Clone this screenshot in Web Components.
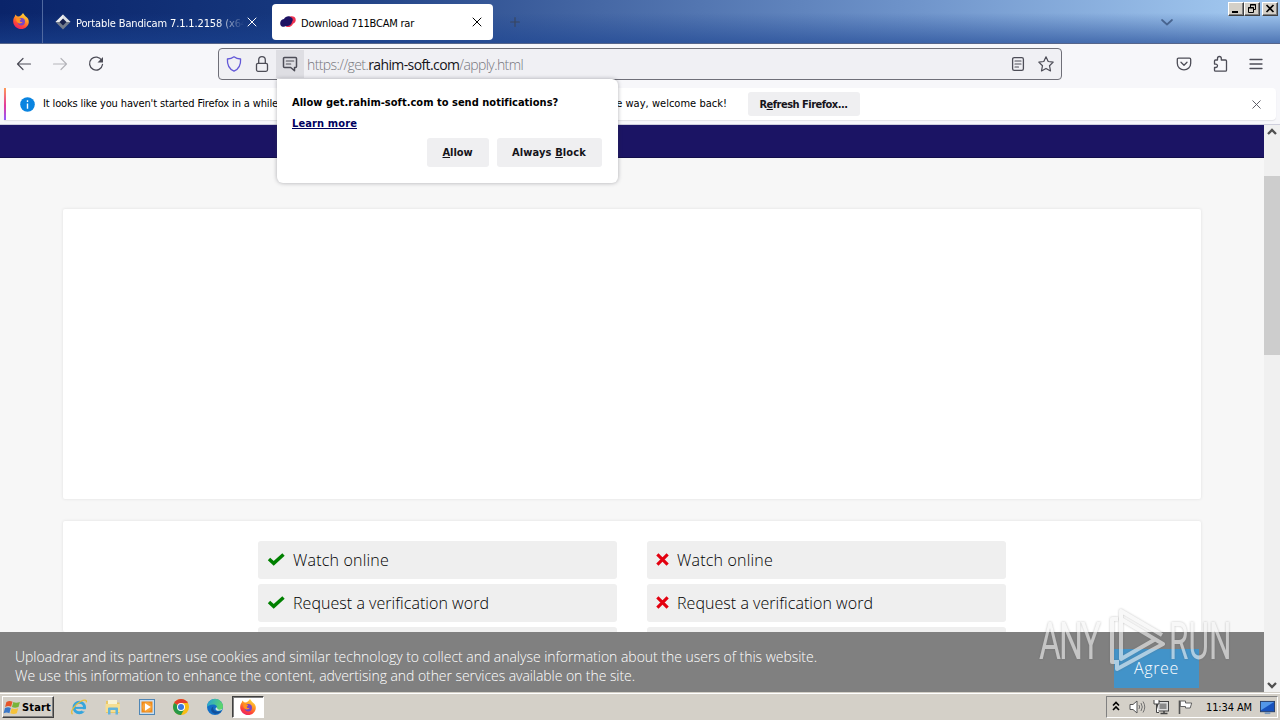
<!DOCTYPE html>
<html lang="en">
<head>
<meta charset="utf-8">
<title>Download 711BCAM rar</title>
<style>
    body { margin: 0; width: 1280px; height: 720px; overflow: hidden; font-family: "DejaVu Sans Condensed", "DejaVu Sans", sans-serif; font-stretch: condensed; font-size: 11px; color: #000; }
</style>
</head>
<body>
    <desktop-screen>
        <title-bar slot="chrome">
            <browser-tab width="229"><ui-icon slot="icon" name="diamond" size="16"></ui-icon><fit-text w="171">Portable Bandicam 7.1.1.2158 (x64</fit-text></browser-tab>
            <browser-tab width="221" active><ui-icon slot="icon" name="blob" size="16"></ui-icon><fit-text w="113">Download 711BCAM rar</fit-text></browser-tab>
        </title-bar>
        <nav-bar slot="chrome"></nav-bar>
        <notice-bar slot="chrome">
            <fit-text w="235">It looks like you haven't started Firefox in a while</fit-text>
            <fit-text w="121" slot="end">the way, welcome back!</fit-text>
            <push-button slot="action" width="112" height="24"><fit-text w="88">R<u>e</u>fresh Firefox...</fit-text></push-button>
        </notice-bar>

        <web-page slot="page">
            <feature-list slot="features">
                <feature-item kind="yes"><fit-text w="96">Watch online</fit-text></feature-item>
                <feature-item kind="yes"><fit-text w="196">Request a verification word</fit-text></feature-item>
                <feature-item kind="yes"></feature-item>
            </feature-list>
            <feature-list slot="features">
                <feature-item kind="no"><fit-text w="96">Watch online</fit-text></feature-item>
                <feature-item kind="no"><fit-text w="196">Request a verification word</fit-text></feature-item>
                <feature-item kind="no"></feature-item>
            </feature-list>
            <cookie-bar slot="footer">
                <fit-text w="802">Uploadrar and its partners use cookies and similar technology to collect and analyse information about the users of this website.</fit-text>
                <fit-text w="620">We use this information to enhance the content, advertising and other services available on the site.</fit-text>
                <fit-text slot="agree" w="45">Agree</fit-text>
            </cookie-bar>
        </web-page>

        <task-bar slot="taskbar"></task-bar>

        <permission-popup slot="overlay">
            <fit-text w="266">Allow get.rahim-soft.com to send notifications?</fit-text>
            <fit-text slot="link" w="65">Learn more</fit-text>
            <push-button slot="actions" width="62" height="29"><fit-text w="30"><u>A</u>llow</fit-text></push-button>
            <push-button slot="actions" width="105" height="29"><fit-text w="74">Always <u>B</u>lock</fit-text></push-button>
        </permission-popup>
        <water-mark slot="overlay"></water-mark>
    </desktop-screen>
</body>
<script>
    const line = 'fill="none" stroke="currentColor" stroke-linecap="round" stroke-linejoin="round"';

    // every icon sits in a 16 x 16 box
    const icons = {
        firefox: `<defs><linearGradient id="f" x1=".8" y1="0" x2=".3" y2="1"><stop offset="0" stop-color="#ffe140"/><stop offset=".4" stop-color="#ff9a25"/><stop offset=".75" stop-color="#ff4238"/><stop offset="1" stop-color="#e8226a"/></linearGradient></defs>
            <path fill="url(#f)" d="M10 0c1 1.500 1.500 2.300 2.500 3.200C14.800 4.700 16 6.500 15.800 9.200 15.500 13 12.200 16 8.200 16 4 16 .4 12.800.2 8.700.1 6.400.8 4.600 2 3l.4-1.600L4 3.200l2 .2C7.500 3 8.700 1.700 10 0z"/>
            <circle cx="8.300" cy="8.700" r="3.700" fill="#7746c6"/>
            <path fill="#ff9320" d="M3.400 5.200c1.800-.4 3.500.1 4.800 1.300L6.700 7.700c.2 1.200 1.500 1.600 3 1-1 1.900-3.600 2.300-5.200.8C3.400 8.400 3 6.800 3.400 5.200z"/>`,
        diamond: `<path d="M8 .5 15.500 8 8 15.500.5 8z" fill="#747d8c"/><path d="M8 .5 15.500 8H8z" fill="#d9dde3"/><path d="M8 .5.5 8H8z" fill="#eceef2"/><path d="M8 4.500 11.500 8 8 11.500 4.500 8z" fill="#17214d"/>`,
        blob: `<path d="M8.500 3.500c2-2 6-1.800 7 1 .8 2.500-.4 4.500-2.500 5.200-1 3.300-5 3.800-7 3z" fill="#ee3150"/><path d="M4 5c1.500-3.200 5.500-3.600 7-1.700 2 .5 2.300 3.200 1 4.700-.5 3-3.500 4.600-6 4C4.500 13.500.5 13 .2 10 0 7.200 1.500 5.400 4 5z" fill="#1d1263"/>`,
        close: `<path ${line} d="M4 4l8 8M12 4l-8 8"/>`,
        plus: `<path ${line} stroke-width="1.300" d="M8 3v10M3 8h10"/>`,
        chevron: `<path ${line} stroke-width="1.700" d="M3 6l5 4.500L13 6"/>`,
        back: `<path ${line} stroke-width="1.200" d="M1.500 8h13M7 2.500 1.500 8 7 13.500"/>`,
        forward: `<path ${line} stroke-width="1.200" d="M14.500 8h-13M9 2.500 14.500 8 9 13.500"/>`,
        reload: `<path ${line} stroke-width="1.300" d="M13.800 4.500A6.500 6.500 0 1 0 14.500 8.500"/><path fill="currentColor" d="M15 1v5.500H9.500z"/>`,
        shield: `<path ${line} stroke-width="1.300" d="M8 .8c2 1.500 4.200 2.100 6.600 2.200.3 5.600-1.600 10-6.600 12.200C3 13 1.100 8.600 1.400 3 3.800 2.900 6 2.300 8 .8z"/>`,
        lock: `<rect x="2.500" y="7.300" width="11" height="8" rx="1.500" ${line} stroke-width="1.300"/><path ${line} stroke-width="1.300" d="M4.700 7V4a3.300 3.300 0 0 1 6.600 0v3"/>`,
        message: `<path ${line} stroke-width="1.500" d="M2.500 1.500h11a1 1 0 0 1 1 1v8a1 1 0 0 1-1 1H12.500v3.300L8.700 11.500H2.500a1 1 0 0 1-1-1v-8a1 1 0 0 1 1-1z"/><path ${line} stroke-width="1.200" d="M4.300 5h7.400M4.300 8h4.400"/>`,
        reader: `<rect x="2.600" y="1.600" width="10.800" height="12.800" rx="1.600" ${line} stroke-width="1.300"/><path ${line} stroke-width="1.200" d="M5 5h6M5 8h6M5 11h3.500"/>`,
        star: `<path ${line} stroke-width="1.200" d="M8 .8l2.200 4.700 5 .6-3.700 3.600 1 5.200L8 12.400l-4.500 2.500 1-5.200L.8 6.100l5-.6z"/>`,
        pocket: `<path ${line} stroke-width="1.300" d="M2.500 2.200h11c.7 0 1.200.5 1.200 1.200v3.800a6.700 6.700 0 0 1-13.400 0V3.400c0-.7.500-1.200 1.200-1.200z"/><path ${line} stroke-width="1.300" d="M5 6.300l3 2.900 3-2.900"/>`,
        puzzle: `<path ${line} stroke-width="1.300" d="M5.500 4V2.400a1.900 1.900 0 0 1 3.800 0V4h4.200c.6 0 1 .4 1 1v9.200c0 .6-.4 1-1 1H3.500c-.6 0-1-.4-1-1v-2.700h1.300a1.700 1.700 0 0 0 0-3.400H2.500V5c0-.6.400-1 1-1z"/>`,
        menu: `<path ${line} stroke-width="1.300" d="M2 3.500h12M2 8h12M2 12.500h12"/>`,
        info: `<circle cx="8" cy="8" r="7.800" fill="#0a84e0"/><path stroke="#fff" stroke-width="1.500" d="M8 7v5.500M8 3.500v1.700"/>`,
        check: `<path fill="none" stroke="green" stroke-width="3.500" d="M1 7l4.700 4.300L15.500 2.500"/>`,
        cross: `<path fill="none" stroke="#e3000f" stroke-width="3.300" d="M2.500 2.500l11 11M13.500 2.500l-11 11"/>`,
        arrow: `<path fill="none" stroke="#505050" stroke-width="2.300" d="M4 9l4-4 4 4"/>`,
        windows: `<path d="M1.500 2.200C4 .5 6.300 1 8 1.800L6.500 7.200C4.500 6.200 2.700 6.200.1 7.400z" fill="#e7562a"/><path d="M8.900 2.200c2 1 4.500.9 7-.2l-1.500 5.400c-2.500 1-4.700 1-7 .1z" fill="#78b43a"/><path d="M0 8.600c2.300-1.200 4.300-1.200 6.200 0L4.700 14.200C2.800 13 1 13-1.500 14z" fill="#3b78c8"/><path d="M7.100 8.900c2.200.9 4.500.9 7-.1l-1.500 5.400c-2.300 1-4.800.9-7-.2z" fill="#f5c23a"/>`,
        ie: `<circle cx="8.300" cy="8.500" r="5.300" fill="none" stroke="#35a5dd" stroke-width="3"/><path d="M4 8.900h9" stroke="#35a5dd" stroke-width="2"/><path d="M9.800 10.200h7v2.200h-5z" fill="#d4d0c8"/><path d="M1.500 15.300c-3-2.800 3-10 8-12.800 3.500-1.900 6.500-2 5.800.8" fill="none" stroke="#e7bd38" stroke-width="1.300"/>`,
        folder: `<path d="M1 2h5l1 1.500h7.500V14H1z" fill="#e8c767"/><path d="M3 1h9v5H3z" fill="#f8f3d7"/><path d="M.5 5h14.500v8H.5z" fill="#f6df92"/><path d="M3 15.500V9.500q0-1 1-1h8q1 0 1 1v6h-2.500V11h-5v4.500z" fill="#62b4dc"/>`,
        media: `<rect x=".5" y=".5" width="15" height="15" fill="#c7ddf0" stroke="#4f86b5"/><rect x="2.500" y="2.500" width="11" height="11" fill="#f08a18"/><circle cx="8" cy="8" r="4.800" fill="#f8a43a"/><path d="M6 4.300 11.800 8 6 11.700z" fill="#fff"/>`,
        chrome: `<circle cx="8" cy="8" r="8" fill="#f9bd14"/><path d="M8 8 1.100 4A8 8 0 0 1 14.900 4z" fill="#e23c2d"/><path d="M8 8 1.100 4A8 8 0 0 0 8 16l3.400-6z" fill="#279847"/><path d="M8 4h6.900L12 9z" fill="#f9bd14"/><circle cx="8" cy="8" r="4" fill="#fff"/><circle cx="8" cy="8" r="3" fill="#3878e0"/>`,
        edge: `<defs><linearGradient id="e" x1="0" y1="0" x2="1" y2=".3"><stop offset="0" stop-color="#239fdd"/><stop offset="1" stop-color="#5cd66c"/></linearGradient></defs><circle cx="8" cy="8" r="8" fill="#136fc6"/><path d="M0 8a8 8 0 0 1 16-.5c0 2.700-1.600 4-4 4-1.600 0-2.800-.6-2.500-1.500C11 7.500 9 5.500 6 5.500 3 5.500.5 7 0 8z" fill="url(#e)"/><path d="M6.500 7.500c-1.500 3.500 2 6.500 8 4.500-2 3-7 4-9.500 1-1.500-1.800-.8-4.500 1.500-5.500z" fill="#12509a"/><path d="M9.600 8.300c1 2.500 2.500 3.200 5.900 1.500-.3 1.500-4.500 3-6.500 1.200-.9-.8-.4-2 .6-2.700z" fill="#d4e5e7"/>`,
        up: `<path fill="none" stroke="#000" stroke-width="1.600" d="M5 6.500l3-3 3 3M5 11l3-3 3 3"/>`,
        speaker: `<path d="M1 5.500h3L8 2v12L4 10.500H1z" fill="#fff" stroke="#555"/><path fill="none" stroke="#666" stroke-width=".9" d="M10 6q1.300 2 0 4M12 4q2.600 4 0 8M14 2.500q3.500 5.500 0 11"/>`,
        network: `<rect x="4.500" y="2.500" width="11" height="9.500" fill="#ddd" stroke="#444"/><rect x="6.500" y="4.500" width="7" height="5.500" fill="#8a8a8a"/><path d="M7.500 14.500h7M11 12v2" stroke="#444" stroke-width="1.500"/><path d="M1 1v4h5V1M3.500 5v8.500H6" fill="#fff" stroke="#444"/>`,
        flag: `<path d="M2.500 1.500V15" stroke="#555" stroke-width="1.600"/><path d="M3.300 2h5.200v2H14.700l-1.500 5H8.500V7.500H3.300z" fill="#fff" stroke="#555" stroke-width=".9"/>`,
        screen: `<rect x=".5" y="1.500" width="15" height="11" fill="#1752bd" stroke="#273f68"/><path d="M1 2h14L1 11z" fill="#5397e8"/><path d="M5 14h6" stroke="#7898bd" stroke-width="2"/>`
    };

    class UiIcon extends HTMLElement {
        connectedCallback() {
            const size = this.getAttribute('size') || 16;
            this.attachShadow({ mode : 'open' });
            this.shadowRoot.innerHTML = `
                <style>
                    :host { display: block; flex: none; width: ${size}px; height: ${size}px; }
                    svg { display: block; overflow: visible; }
                </style>
                <svg width="${size}" height="${size}" viewBox="0 0 16 16">${icons[this.getAttribute('name')]}</svg>
            `;
        }
    }

    // spreads its letters so that the text takes exactly w pixels
    class FitText extends HTMLElement {
        connectedCallback() {
            this.attachShadow({ mode : 'open' });
            this.shadowRoot.innerHTML = `
                <style>
                    :host { display: block; white-space: nowrap; flex: none; width: max-content; }
                </style>
                <slot></slot>
            `;
            const extra = this.getAttribute('w') - this.getBoundingClientRect().width;
            this.style.letterSpacing = extra / this.textContent.length + 'px';
        }
    }

    class DesktopScreen extends HTMLElement {
        connectedCallback() {
            this.attachShadow({ mode : 'open' });
            this.shadowRoot.innerHTML = `
                <style>
                    :host { display: flex; flex-direction: column; width: 1280px; height: 720px; background: #f7f7fa; overflow: hidden; }
                </style>
                <slot name="chrome"></slot>
                <slot name="page"></slot>
                <slot name="taskbar"></slot>
                <slot name="overlay"></slot>
            `;
        }
    }

    class TitleBar extends HTMLElement {
        connectedCallback() {
            this.attachShadow({ mode : 'open' });
            this.shadowRoot.innerHTML = `
                <style>
                    :host { display: flex; height: 44px; flex: none; box-sizing: border-box; border-bottom: 1px solid #56658a;
                        background: linear-gradient(to bottom, rgba(30,70,150,0) 0, rgba(30,70,150,.0) 30%, rgba(28,68,145,.62) 100%), linear-gradient(to right, #0a246a 0, #15367c 270px, #4668a5 600px, #6d92c9 900px, #a0c6ee 1240px); }
                    .app { width: 41px; padding-right: 1px; display: flex; align-items: center; justify-content: center; border-right: 1px solid #5069a0; }
                    .app ui-icon { margin-top: -1px; }
                    .add { display: flex; align-items: center; margin-left: 15px; color: #38455f; }
                    .list { display: flex; align-items: center; margin-left: auto; margin-right: 53px; color: #48648f; }
                    .buttons { display: flex; padding: 2px 2px 0 0; }
                    .buttons div { width: 16px; height: 14px; box-sizing: border-box; background: #d4d0c8; border: 1px solid; border-color: #fff #404040 #404040 #fff; box-shadow: inset -1px -1px #808080; }
                    .buttons div:last-child { margin-left: 2px; }
                    .buttons svg { display: block; }
                </style>
                <div class="app"><ui-icon name="firefox" size="16"></ui-icon></div>
                <slot></slot>
                <div class="add"><ui-icon name="plus" size="14"></ui-icon></div>
                <div class="list"><ui-icon name="chevron" size="16"></ui-icon></div>
                <div class="buttons">
                    <div><svg width="14" height="12"><path d="M3 8h6v2H3z"/></svg></div>
                    <div><svg width="14" height="12"><path d="M5.500 4.500v-3h5v5h-2M5 2h6M3.500 4.500h5v5h-5zM3 5h6" fill="none" stroke="#000"/></svg></div>
                    <div><svg width="14" height="12"><path d="M3.500 2l7 7M10.500 2l-7 7" stroke="#000" stroke-width="1.700"/></svg></div>
                </div>
            `;
        }
    }

    class BrowserTab extends HTMLElement {
        connectedCallback() {
            this.attachShadow({ mode : 'open' });
            this.shadowRoot.innerHTML = `
                <style>
                    :host { display: flex; align-items: center; flex: none; box-sizing: border-box; width: ${this.getAttribute('width')}px; margin: 4px 0 3px; padding: 0 12px; color: #fff; border-radius: 4px; }
                    :host([active]) { background: #fff; color: #000; padding: 0 8px; }
                    .text { flex: 1; overflow: hidden; margin: 2px 0 0 5px; }
                    :host(:not([active])) .text { flex: 0 0 168px; mask-image: linear-gradient(to left, transparent, #000 28px); -webkit-mask-image: linear-gradient(to left, transparent, #000 28px); }
                    .x { margin-left: auto; }
                </style>
                <slot name="icon"></slot>
                <div class="text"><slot></slot></div>
                <ui-icon class="x" name="close" size="16"></ui-icon>
            `;
        }
    }

    class NavBar extends HTMLElement {
        connectedCallback() {
            this.attachShadow({ mode : 'open' });
            this.shadowRoot.innerHTML = `
                <style>
                    :host { display: flex; align-items: center; flex: none; height: 44px; padding: 0 16px 4px; box-sizing: border-box; background: #f7f7fa; color: #4d4d57; }
                    .moves { display: flex; gap: 20px; width: 202px; }
                    .off { opacity: .38; }
                    .url { display: flex; align-items: center; width: 844px; height: 32px; box-sizing: border-box; border: 1px solid #6f6f78; border-radius: 4px; background: #f0f0f4; }
                    .shield { color: #6358d8; margin: 0 12px 0 7px; }
                    .perm { display: flex; align-items: center; justify-content: center; width: 28px; height: 28px; background: #dedee3; margin-left: 6px; }
                    .address { font: 350 14px "Open Sans", sans-serif; color: #77777d; margin-left: 3px; }
                    b { font-weight: 400; color: #15141a; }
                    .star { margin: 0 7px 0 12px; }
                    .reader { margin-left: auto; }
                    .tools { display: flex; gap: 20px; margin-left: auto; }
                </style>
                <div class="moves">
                    <ui-icon name="back"></ui-icon>
                    <ui-icon name="forward" class="off"></ui-icon>
                    <ui-icon name="reload"></ui-icon>
                </div>
                <div class="url">
                    <ui-icon class="shield" name="shield"></ui-icon>
                    <ui-icon name="lock"></ui-icon>
                    <div class="perm"><ui-icon name="message"></ui-icon></div>
                    <fit-text class="address" w="216">https://get.<b>rahim-soft.com</b>/apply.html</fit-text>
                    <ui-icon class="reader" name="reader"></ui-icon>
                    <ui-icon class="star" name="star"></ui-icon>
                </div>
                <div class="tools">
                    <ui-icon name="pocket"></ui-icon>
                    <ui-icon name="puzzle"></ui-icon>
                    <ui-icon name="menu"></ui-icon>
                </div>
            `;
        }
    }

    class NoticeBar extends HTMLElement {
        connectedCallback() {
            this.attachShadow({ mode : 'open' });
            this.shadowRoot.innerHTML = `
                <style>
                    :host { display: block; flex: none; height: 37px; box-sizing: border-box; padding: 0 4px; background: #f7f7fa; border-bottom: 1px solid #cfcfdc; }
                    .bar { display: flex; align-items: center; height: 32px; background: #fff; border-radius: 0 4px 4px 0; box-shadow: 0 1px 1px #e2e2e6; }
                    .edge { width: 2px; height: 32px; background: linear-gradient(#ff9a56, #e2389c 55%, #9059ff); }
                    .icon { margin: 0 8px 0 14px; }
                    .message { display: flex; justify-content: space-between; width: 684px; margin-top: -1px; }
                    .action { margin-left: 21px; }
                    .x { margin: 0 12px 0 auto; color: #55555f; }
                </style>
                <div class="bar">
                    <div class="edge"></div>
                    <ui-icon class="icon" name="info" size="15"></ui-icon>
                    <div class="message"><slot></slot><slot name="end"></slot></div>
                    <div class="action"><slot name="action"></slot></div>
                    <ui-icon class="x" name="close" size="15"></ui-icon>
                </div>
            `;
        }
    }

    class PushButton extends HTMLElement {
        connectedCallback() {
            this.attachShadow({ mode : 'open' });
            this.shadowRoot.innerHTML = `
                <style>
                    :host { display: flex; align-items: center; justify-content: center; width: ${this.getAttribute('width')}px; height: ${this.getAttribute('height')}px; padding-right: 1px; box-sizing: border-box; background: #efeff1; border-radius: 3px; font-weight: bold; color: #15141a; }
                    ::slotted(fit-text) { margin-top: 1px; }
                </style>
                <slot></slot>
            `;
        }
    }

    class WebPage extends HTMLElement {
        connectedCallback() {
            this.attachShadow({ mode : 'open' });
            this.shadowRoot.innerHTML = `
                <style>
                    :host { display: flex; flex: none; height: 567px; font-family: "Open Sans", sans-serif; font-stretch: normal; font-size: 16px; font-weight: 350; overflow: hidden; }
                    main { display: flex; flex-direction: column; width: 1264px; background: #f7f7f7; overflow: hidden; }
                    .head { height: 33px; flex: none; background: #1b1464; box-sizing: border-box; border-bottom: 1px solid #120e4a; }
                    .card { background: #fff; box-shadow: 0 0 3px #dcdcdc; margin: 0 63px; flex: none; border-radius: 2px; }
                    .ad { height: 290px; margin-top: 51px; }
                    .features { display: flex; justify-content: center; gap: 30px; height: 111px; margin-top: 22px; padding-top: 20px; box-sizing: border-box; }
                    .scroll { display: flex; flex-direction: column; align-items: center; width: 16px; background: #f0f0f0; }
                    .thumb { width: 16px; height: 179px; background: #cdcdcd; margin: 35px 0 auto; }
                    .down { transform: rotate(180deg); }
                </style>
                <main>
                    <div class="head"></div>
                    <div class="card ad"></div>
                    <div class="card features"><slot name="features"></slot></div>
                    <slot name="footer"></slot>
                </main>
                <div class="scroll">
                    <ui-icon name="arrow"></ui-icon>
                    <div class="thumb"></div>
                    <ui-icon name="arrow" class="down"></ui-icon>
                </div>
            `;
        }
    }

    class FeatureList extends HTMLElement {
        connectedCallback() {
            this.attachShadow({ mode : 'open' });
            this.shadowRoot.innerHTML = `
                <style>
                    :host { display: flex; flex-direction: column; gap: 5px; width: 359px; }
                </style>
                <slot></slot>
            `;
        }
    }

    class FeatureItem extends HTMLElement {
        connectedCallback() {
            const yes = this.getAttribute('kind') == 'yes';
            this.attachShadow({ mode : 'open' });
            this.shadowRoot.innerHTML = `
                <style>
                    :host { display: flex; align-items: center; flex: none; height: 38px; box-sizing: border-box; padding: 0 ${yes ? 10 : 8}px 1px; gap: ${yes ? 9 : 7}px; background: #efefef; border-radius: 3px; }
                </style>
                <ui-icon name="${yes ? 'check' : 'cross'}" size="${yes ? 16 : 15}"></ui-icon>
                <slot></slot>
            `;
        }
    }

    class CookieBar extends HTMLElement {
        connectedCallback() {
            this.attachShadow({ mode : 'open' });
            this.shadowRoot.innerHTML = `
                <style>
                    :host { display: flex; flex: none; justify-content: space-between; height: 60px; margin-top: auto; box-sizing: border-box; padding: 15px 65px 0 15px; background: #808080; color: #fff; font-size: 14px; line-height: 19px; position: relative; }
                    .agree { display: flex; align-items: center; justify-content: center; width: 85px; height: 39px; background: #4293c9; font-size: 16px; margin-top: 2px; }
                </style>
                <div><slot></slot></div>
                <div class="agree"><slot name="agree"></slot></div>
            `;
        }
    }

    class TaskBar extends HTMLElement {
        connectedCallback() {
            this.attachShadow({ mode : 'open' });
            this.shadowRoot.innerHTML = `
                <style>
                    :host { display: flex; align-items: center; flex: none; height: 28px; box-sizing: border-box; padding: 2px 2px 1px; background: #d4d0c8; border-top: 1px solid #d4d0c8; box-shadow: inset 0 1px #fff; }
                    .start { display: flex; align-items: center; gap: 2px; width: 52px; height: 22px; box-sizing: border-box; padding-left: 2px; border: 1px solid; border-color: #fff #404040 #404040 #fff; box-shadow: inset -1px -1px #808080; font-weight: bold; }
                    .apps { display: flex; align-items: center; gap: 18px; margin-left: 17px; }
                    .open { display: flex; align-items: center; justify-content: center; width: 32px; height: 22px; box-sizing: border-box; background: #fff; border: 1px solid; border-color: #404040 #fff #fff #404040; box-shadow: inset 1px 1px #808080; margin-left: 9px; }
                    .tray { display: flex; align-items: center; margin-left: auto; width: 172px; height: 22px; box-sizing: border-box; padding-left: 1px; border: 1px solid; border-color: #808080 #fff #fff #808080; gap: 8px; }
                    .tray ui-icon:nth-child(1) { margin-right: -3px; }
                    .clock { margin: 0 0 0 5px; }
                </style>
                <div class="start"><ui-icon name="windows" size="15"></ui-icon><fit-text w="29">Start</fit-text></div>
                <div class="apps">
                    <ui-icon name="ie" size="16"></ui-icon>
                    <ui-icon name="folder" size="16"></ui-icon>
                    <ui-icon name="media" size="16"></ui-icon>
                    <ui-icon name="chrome" size="16"></ui-icon>
                    <ui-icon name="edge" size="16"></ui-icon>
                </div>
                <div class="open"><ui-icon name="firefox" size="16"></ui-icon></div>
                <div class="tray">
                    <ui-icon name="up"></ui-icon>
                    <ui-icon name="speaker"></ui-icon>
                    <ui-icon name="network"></ui-icon>
                    <ui-icon name="flag"></ui-icon>
                    <fit-text class="clock" w="46">11:34 AM</fit-text>
                    <ui-icon name="screen" size="15"></ui-icon>
                </div>
            `;
        }
    }

    class PermissionPopup extends HTMLElement {
        connectedCallback() {
            this.attachShadow({ mode : 'open' });
            this.shadowRoot.innerHTML = `
                <style>
                    :host { display: flex; flex-direction: column; position: absolute; left: 277px; top: 79px; width: 341px; height: 104px; box-sizing: border-box; padding: 16px 16px 16px 15px; background: #fff; border-radius: 0 6px 6px 6px; box-shadow: 0 0 4px rgba(58,57,68,.4); font-weight: bold; line-height: 16px; }
                    .link { color: #00005f; text-decoration: underline; margin-top: 5px; width: max-content; }
                    .actions { display: flex; justify-content: flex-end; gap: 8px; margin-top: auto; }
                </style>
                <slot></slot>
                <div class="link"><slot name="link"></slot></div>
                <div class="actions"><slot name="actions"></slot></div>
            `;
        }
    }

    class WaterMark extends HTMLElement {
        connectedCallback() {
            this.attachShadow({ mode : 'open' });
            this.shadowRoot.innerHTML = `
                <style>
                    :host { display: block; position: absolute; left: 1030px; top: 600px; width: 240px; height: 90px; opacity: .6; filter: drop-shadow(0 0 1px rgba(90,90,90,.6)); }
                    svg { display: block; overflow: visible; }
                    text { font: 400 51px Roboto, sans-serif; fill: #f4f4f4; }
                </style>
                <svg width="240" height="90">
                    <text transform="translate(9 59) scale(.66 1)" textLength="94" lengthAdjust="spacing">ANY</text>
                    <text transform="translate(139 59) scale(.62 1)" textLength="101" lengthAdjust="spacing">RUN</text>
                    <path fill="none" stroke="#f4f4f4" stroke-width="4" stroke-linejoin="round" d="M88 19h-6v43h7M132 35 91 11v48l33-19M87 62v7l46-25-42-25"/>
                </svg>
            `;
        }
    }

    customElements.define('desktop-screen', DesktopScreen);
    customElements.define('title-bar', TitleBar);
    customElements.define('browser-tab', BrowserTab);
    customElements.define('nav-bar', NavBar);
    customElements.define('notice-bar', NoticeBar);
    customElements.define('push-button', PushButton);
    customElements.define('web-page', WebPage);
    customElements.define('feature-list', FeatureList);
    customElements.define('feature-item', FeatureItem);
    customElements.define('cookie-bar', CookieBar);
    customElements.define('task-bar', TaskBar);
    customElements.define('permission-popup', PermissionPopup);
    customElements.define('water-mark', WaterMark);
    customElements.define('ui-icon', UiIcon);
    customElements.define('fit-text', FitText);
</script>
</html>
